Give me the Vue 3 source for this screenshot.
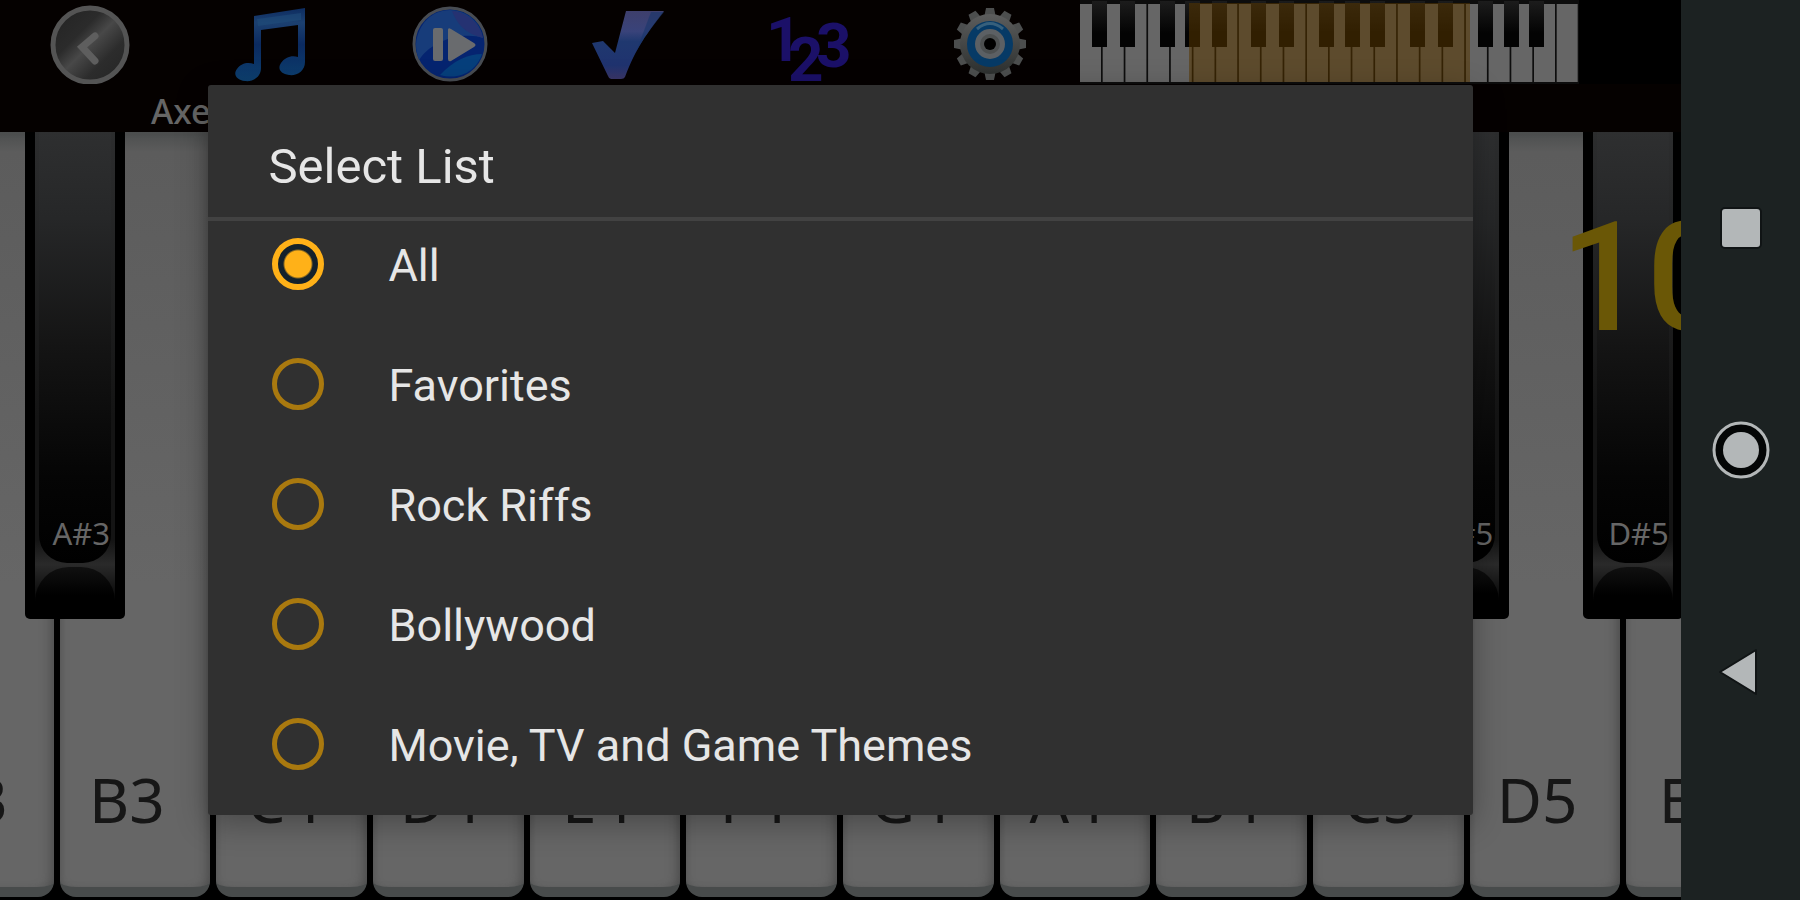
<template>
  <div class="screen">
    <main class="piano">
      <header class="toolbar">
        <button class="tool" aria-label="Back">
          <svg width="80" height="80" viewBox="0 0 80 80">
            <defs>
              <linearGradient id="steel" x1="0" y1="0" x2="1" y2="1">
                <stop offset="0" stop-color="#222" />
                <stop offset=".35" stop-color="#2b2b2b" />
                <stop offset=".5" stop-color="#484848" />
                <stop offset=".7" stop-color="#2c2c2c" />
                <stop offset="1" stop-color="#242424" />
              </linearGradient>
            </defs>
            <circle cx="40" cy="41" r="37" fill="url(#steel)" stroke="#545454" stroke-width="5" />
            <path d="M45 32 L32 43 L45 57" fill="none" stroke="#5e5e5e" stroke-width="7" stroke-linecap="round" />
          </svg>
        </button>
        <button class="tool" aria-label="Songs">
          <svg width="80" height="80" viewBox="0 0 80 80">
            <defs>
              <linearGradient id="note" x1="0" y1="0" x2="0" y2="1">
                <stop offset="0" stop-color="#0d2c60" />
                <stop offset=".2" stop-color="#1c4070" />
                <stop offset=".5" stop-color="#0b2a60" />
                <stop offset="1" stop-color="#0d4070" />
              </linearGradient>
            </defs>
            <path
              d="M24 12 L75 4 V58 C75 67 67 72 59 71 C51 70 47 65 51 59 C55 53 62 51 68 53 V21 L31 26 V64 C31 73 23 78 15 77 C6 76 3 70 7 65 C11 59 18 58 24 60 Z"
              fill="url(#note)"
            />
            <path d="M27 15 L71 9 V16 L28 22 Z" fill="#204c7a" opacity=".6" />
          </svg>
        </button>
        <button class="tool" aria-label="Play">
          <svg width="80" height="80" viewBox="0 0 80 80">
            <circle cx="40" cy="40" r="36" fill="#052470" stroke="#484c52" stroke-width="3" />
            <path d="M6 40 C8 20 22 6 40 6 C58 6 71 20 73 34 C55 28 24 34 9 56 C7 50 6 46 6 40 Z" fill="#173c7a" />
            <path d="M42 7 C58 8 70 20 73 34 C64 31 50 28 42 7 Z" fill="#253272" />
            <path d="M30 71 C44 56 58 50 72 50 C67 65 52 77 30 71 Z" fill="#063f7c" />
            <rect x="23" y="24" width="10" height="33" rx="2" fill="#696b6e" />
            <path d="M38 26 Q38 23 41 25 L64 39 Q67 41 64 43 L41 57 Q38 58 38 55 Z" fill="#696b6e" />
          </svg>
        </button>
        <button class="tool" aria-label="Learn">
          <svg width="80" height="80" viewBox="0 0 80 80">
            <defs>
              <linearGradient id="tick" x1="0" y1="0" x2="0" y2="1">
                <stop offset="0" stop-color="#3e3f6c" />
                <stop offset=".3" stop-color="#39437a" />
                <stop offset=".45" stop-color="#1f386f" />
                <stop offset=".8" stop-color="#20336f" />
                <stop offset="1" stop-color="#3a3668" />
              </linearGradient>
            </defs>
            <path d="M2 39 L13 37 L25 49 L36 7 H74 C57 29 46 44 35 73 Q34 75 31 75 H21 Q19 75 18 72 Z" fill="url(#tick)" />
            <path d="M61 8 H74 C61 24 53 35 46 48 Z" fill="#19356b" opacity=".6" />
          </svg>
        </button>
        <button class="tool" aria-label="Numbers">
          <svg class="digits" width="84" height="84" viewBox="0 0 84 84">
            <text x="-2" y="61">1</text>
            <text x="20" y="81">2</text>
            <text x="48" y="67">3</text>
          </svg>
        </button>
        <button class="tool" aria-label="Settings">
          <svg width="80" height="80" viewBox="0 0 80 80">
            <defs>
              <linearGradient id="gear" x1="0" y1="0" x2="0" y2="1">
                <stop offset="0" stop-color="#5c5d5d" />
                <stop offset="1" stop-color="#2d302f" />
              </linearGradient>
            </defs>
            <g fill="url(#gear)">
              <path
                v-for="n in 12"
                :key="n"
                d="M34 14 L36 4 H44 L46 14 Z"
                :transform="`rotate(${n * 30} 40 40)`"
                fill="#4c4e4e"
              />
              <circle cx="40" cy="40" r="30" />
            </g>
            <circle cx="40" cy="40" r="19" fill="#5c6064" stroke="#063a66" stroke-width="8" />
            <path d="M27 25 Q40 14 53 25" fill="none" stroke="#37607c" stroke-width="3" />
            <circle cx="40" cy="40" r="10" fill="#4c4f50" />
            <circle cx="40" cy="40" r="6" fill="#000" />
          </svg>
        </button>

        <svg class="range" viewBox="0 0 499 84" preserveAspectRatio="none">
          <defs>
            <linearGradient id="ebony" x1="0" y1="0" x2="0" y2="1">
              <stop offset="0" stop-color="#1c1c1c" />
              <stop offset=".7" stop-color="#030303" />
            </linearGradient>
          </defs>
          <rect width="499" height="84" fill="#0d0d0d" />
          <rect v-for="n in 22" :key="n" :x="(n - 1) * 22.7" y="4" width="21" height="78" fill="#666" />
          <rect v-for="x in miniBlack" :key="x" :x="x - 7" y="1" width="15" height="46" fill="url(#ebony)" />
          <rect x="109" y="3" width="281" height="79" fill="#553500" opacity=".56" />
        </svg>
        <span class="toolbar-end"></span>
      </header>

      <div class="song">Axe</div>

      <div class="keyboard">
        <div class="whites">
          <div v-for="note in whiteKeys" :key="note" class="white">
            <div class="face"><span>{{ note }}</span></div>
          </div>
        </div>
        <div v-for="key in blackKeys" :key="key.note" class="black" :style="{ left: key.left + '%' }">
          <div class="well">
            <div class="slope"><span>{{ key.note }}</span></div>
            <div class="lip"></div>
          </div>
        </div>
      </div>

      <div class="score">10</div>

      <div class="overlay">
        <form class="dialog" role="dialog" aria-labelledby="dialog-title">
          <h2 id="dialog-title">Select List</h2>
          <div class="options">
            <label v-for="item in lists" :key="item">
              <input v-model="selected" type="radio" name="list" :value="item">
              <span>{{ item }}</span>
            </label>
          </div>
        </form>
      </div>
    </main>

    <nav class="navbar">
      <button aria-label="Recent apps">
        <svg width="60" height="60" viewBox="0 0 60 60">
          <rect x="10" y="10" width="40" height="40" rx="4" fill="#b3b7b8" stroke="#101415" stroke-width="2" />
        </svg>
      </button>
      <button aria-label="Home">
        <svg width="60" height="60" viewBox="0 0 60 60">
          <circle cx="30" cy="30" r="27" fill="#040606" stroke="#b3b7b8" stroke-width="3" />
          <circle cx="30" cy="30" r="18" fill="#b3b7b8" />
        </svg>
      </button>
      <button aria-label="Back">
        <svg width="60" height="60" viewBox="0 0 60 60">
          <path d="M9 30 L45 8 V52 Z" fill="#b3b7b8" stroke="#101415" stroke-width="2" stroke-linejoin="round" />
        </svg>
      </button>
    </nav>
  </div>
</template>

<script setup>
import { ref } from 'vue'

const lists = ['All', 'Favorites', 'Rock Riffs', 'Bollywood', 'Movie, TV and Game Themes']
const selected = ref('All')

const whiteKeys = ['A3', 'B3', 'C4', 'D4', 'E4', 'F4', 'G4', 'A4', 'B4', 'C5', 'D5', 'E5']

// left edge in percent of the keyboard width
const blackKeys = [
  { note: 'A#3', left: 1.5 },
  { note: 'C#5', left: 83.8 },
  { note: 'D#5', left: 94.15 }
]

const miniBlack = [19, 47, 87, 112, 139, 178, 206, 246, 272, 297, 337, 365, 405, 431, 456]
</script>

<style>
body {
  margin: 0;
  background: #000;
}
</style>

<style scoped>
.screen {
  display: flex;
  height: 100vh;
  overflow: hidden;
  font-family: "Noto Sans", "Open Sans", sans-serif;
}
button {
  padding: 0;
  border: none;
  background: none;
  cursor: pointer;
}
svg {
  display: block;
}
.piano {
  position: relative;
  flex: 1;
  min-width: 0;
  display: flex;
  flex-direction: column;
  overflow: hidden;
  background: #050100;
}
.toolbar {
  display: flex;
  height: 84px;
}
.tool {
  flex: 180 1 0;
  min-width: 0;
  display: flex;
  justify-content: center;
  align-items: flex-end;
}
.digits {
  overflow: visible;
  font: bold 62px "Roboto", sans-serif;
  fill: #1b1068;
}
.range {
  flex: 499 1 0;
  min-width: 0;
  height: 84px;
}
.toolbar-end {
  flex: 102 1 0;
  background: #000;
}
.song {
  height: 48px;
  padding-left: 151px;
  font-size: 34px;
  font-weight: 500;
  line-height: 54px;
  color: #666;
}
.keyboard {
  position: relative;
  flex: 1;
  background: #000;
}
.whites {
  display: flex;
  height: 100%;
  margin-left: -5.96%;
}
.white {
  flex: 0 0 8.797%;
  box-sizing: border-box;
  padding: 0 3px 3px;
}
.face {
  display: flex;
  align-items: flex-end;
  justify-content: center;
  box-sizing: border-box;
  height: 100%;
  padding: 0 16px 48px 0;
  border-bottom: 10px solid #484b4b;
  border-radius: 0 0 16px 16px;
  background: linear-gradient(#4c4e4e, #5c5c5c 20px, #666 60%);
  box-shadow: inset -10px 0 12px -8px #484848, inset 6px 0 8px -6px #505050;
  font-size: 62px;
  line-height: 80px;
  color: #161616;
}
.black {
  position: absolute;
  top: 0;
  box-sizing: border-box;
  width: 5.95%;
  height: 487px;
  padding: 0 10px 12px;
  border-radius: 0 0 5px 5px;
  background: #000;
}
.well {
  display: flex;
  flex-direction: column;
  gap: 4px;
  height: 100%;
  background: linear-gradient(#2c2d2e, #141414 60%, #141414 86%, #2a2a2a 91%, #000);
}
.slope {
  flex: 1;
  display: flex;
  align-items: flex-end;
  justify-content: center;
  margin: 0 4px;
  padding: 0 0 8px 12px;
  border-radius: 0 0 28px 28px;
  background: linear-gradient(#2e2f30, #262728 20%, #141414 50%, #050505 80%, #000);
  font-size: 31px;
  line-height: 44px;
  color: #666;
}
.lip {
  height: 40px;
  border-radius: 34px 34px 0 0;
  background: linear-gradient(#101010, #000 70%);
}
.score {
  position: absolute;
  top: 202px;
  left: 1560px;
  font: 500 152px/152px "Roboto", sans-serif;
  color: #6a5706;
}
.overlay {
  position: absolute;
  inset: 0;
  display: flex;
  align-items: center;
  justify-content: center;
}
.dialog {
  width: 75.2%;
  border-radius: 3px;
  background: #303030;
  box-shadow: 0 8px 32px rgba(0, 0, 0, 0.3);
  color: #e6e6e6;
  font-family: "Roboto", sans-serif;
  overflow: hidden;
}
h2 {
  margin: 0;
  padding: 48px 60px 16px;
  border-bottom: 4px solid #424242;
  font-size: 49px;
  font-weight: 400;
  line-height: 68px;
}
.options {
  display: flex;
  flex-direction: column;
  gap: 60px;
  padding: 13px 64px 41px;
}
label {
  display: flex;
  align-items: center;
  gap: 64px;
  height: 60px;
  font-size: 45px;
  line-height: 64px;
  cursor: pointer;
}
label span {
  padding-top: 4px;
}
input {
  appearance: none;
  flex: none;
  width: 52px;
  height: 52px;
  margin: 0;
  border: 5px solid #a9790f;
  border-radius: 50%;
}
input:checked {
  border: 6px solid #ffb118;
  background: radial-gradient(circle, #ffb118 13px, #14212b 15px);
}
.navbar {
  flex: 0 0 119px;
  display: flex;
  flex-direction: column;
  align-items: center;
  justify-content: space-between;
  box-sizing: border-box;
  padding: 198px 0;
  background: #1c2222;
}
</style>
